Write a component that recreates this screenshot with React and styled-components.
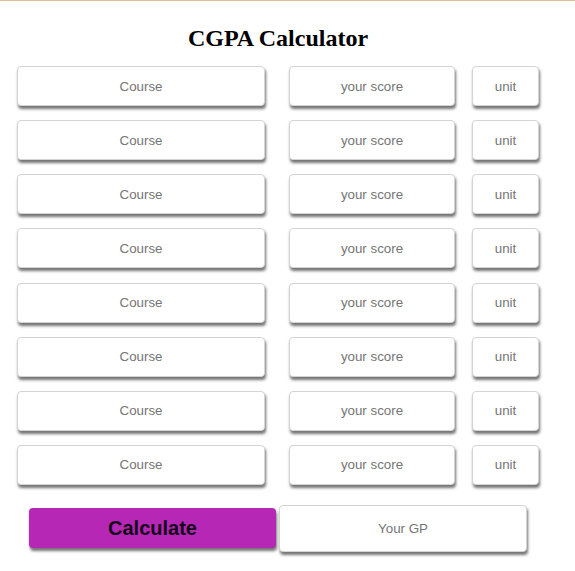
import React from "react";
import styled, { createGlobalStyle } from "styled-components";

const Global = createGlobalStyle`
  html, body { margin: 0; padding: 0; background: #fff; }
  body { font-family: "Liberation Sans", Arial, sans-serif; }
`;

const Page = styled.div`
  border-top: 1px solid #dcc09c;
  width: 575px;
  min-height: 570px;
  box-sizing: border-box;
`;

const Container = styled.div`
  width: 540px;
  margin-left: 8px;
  display: flex;
  flex-direction: column;
  align-items: center;
`;

const Title = styled.h2`
  margin: 23px 0 14px;
  font-family: "Liberation Serif", "Times New Roman", serif;
  font-weight: bold;
  font-size: 24px;
  line-height: 28px;
  color: #000;
`;

const Rows = styled.div`
  display: flex;
  flex-direction: column;
  gap: 14.15px;
  align-self: stretch;
  padding-left: 9px;
`;

const Row = styled.div`
  display: flex;
  align-items: center;
`;

const Field = styled.input`
  box-sizing: border-box;
  width: ${(p) => p.$w}px;
  height: ${(p) => p.$h || 40}px;
  margin-left: ${(p) => p.$ml || 0}px;
  border: 1px solid #d4d4d4;
  border-radius: 4px;
  background: #fff;
  box-shadow: 1px 3px 3px rgba(0, 0, 0, 0.55);
  font-family: "Liberation Sans", Arial, sans-serif;
  font-size: 13.333px;
  text-align: center;
  color: #333;
  outline: none;
  padding: 0;
  &::placeholder { color: #757575; }
`;

const Footer = styled.div`
  display: flex;
  align-items: center;
  gap: 3px;
  margin-top: 20px;
`;

const CalcButton = styled.button`
  box-sizing: border-box;
  width: 247px;
  height: 40px;
  border: none;
  border-radius: 4px;
  background: #b727b5;
  box-shadow: 1px 3px 3px rgba(0, 0, 0, 0.55);
  font-family: "Liberation Sans", Arial, sans-serif;
  font-weight: bold;
  font-size: 20px;
  color: #14061a;
  padding: 0;
  cursor: pointer;
`;

const rows = Array.from({ length: 8 });

export default function App() {
  return (
    <Page>
      <Global />
      <Container>
        <Title>CGPA Calculator</Title>
        <Rows>
          {rows.map((_, i) => (
            <Row key={i}>
              <Field $w={248} placeholder="Course" />
              <Field $w={166} $ml={24} placeholder="your score" />
              <Field $w={67} $ml={17} placeholder="unit" />
            </Row>
          ))}
        </Rows>
        <Footer>
          <CalcButton>Calculate</CalcButton>
          <Field $w={248} $h={47} placeholder="Your GP" readOnly />
        </Footer>
      </Container>
    </Page>
  );
}
